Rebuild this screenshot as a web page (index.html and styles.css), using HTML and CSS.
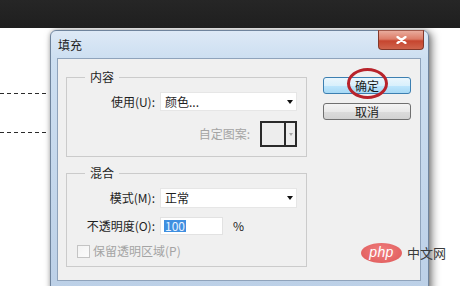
FILE: index.html
```html
<!DOCTYPE html>
<html lang="zh-CN">
<head>
<meta charset="utf-8">
<title>填充</title>
<link rel="stylesheet" href="styles.css">
</head>
<body>
<div class="topbar"></div>
<div class="stage">
  <div class="guide guide-a"></div>
  <div class="guide guide-b"></div>
  <div class="dialog">
    <div class="titlebar">
      <span class="title">填充</span>
      <div class="close">
        <svg width="11" height="8" viewBox="0 0 11 8"><path d="M1.5 1 L9.5 7 M9.5 1 L1.5 7" stroke="#fff" stroke-width="2.2" stroke-linecap="round"/></svg>
      </div>
    </div>
    <div class="client">
      <div class="groups">
        <fieldset class="group">
          <legend>内容</legend>
          <div class="rows rows-content">
            <label class="lbl">使用(U):</label>
            <div class="select sel-a"><span>颜色...</span><i class="caret"></i></div>
            <div class="pattern-row">
              <span class="disabled">自定图案:</span>
              <div class="pattern"><span class="swatch"></span><span class="parrow"><i></i></span></div>
            </div>
          </div>
        </fieldset>
        <fieldset class="group">
          <legend>混合</legend>
          <div class="rows rows-blend">
            <label class="lbl">模式(M):</label>
            <div class="select sel-b"><span>正常</span><i class="caret"></i></div>
            <label class="lbl">不透明度(O):</label>
            <div class="opacity"><div class="input"><span class="sel-text">100</span></div><span class="pct">%</span></div>
            <div class="check-row"><span class="check"></span><span class="disabled">保留透明区域(P)</span></div>
          </div>
        </fieldset>
      </div>
      <div class="buttons">
        <div class="btn btn-default">确定</div>
        <div class="btn">取消</div>
      </div>
    </div>
  </div>
  <div class="circle"></div>
  <div class="wm-logo">php</div>
  <div class="wm-text">中文网</div>
</div>
</body>
</html>
```
FILE: styles.css
```css
* { box-sizing: border-box; }
body {
  margin: 0;
  width: 460px;
  height: 286px;
  overflow: hidden;
  background: #fff;
  font: 12px/16px "Noto Sans CJK SC", "Noto Sans", sans-serif;
  color: #1e1e1e;
}
.topbar { height: 28px; background: linear-gradient(#262626, #1f1f1f); }
.stage { position: relative; height: 258px; overflow: hidden; }
.guide {
  position: absolute;
  left: 0;
  width: 48px;
  height: 1px;
  background: repeating-linear-gradient(90deg, #2b2b2b 0 4px, transparent 4px 7px);
}
.guide-a { top: 65px; }
.guide-b { top: 104px; }

.dialog {
  position: absolute;
  left: 50px;
  top: 2px;
  width: 379px;
  height: 262px;
  border: 1px solid #6f849d;
  border-radius: 6px 6px 0 0;
  background: linear-gradient(180deg, #dde9f6 0, #cddff1 27px, #bcd0e7 100%);
  padding: 0 7px 10px 6px;
  display: flex;
  flex-direction: column;
  box-shadow: 3px 2px 8px rgba(0,0,0,.5), 0 0 4px rgba(0,0,0,.2);
}
.titlebar {
  height: 27px;
  display: flex;
  justify-content: space-between;
  align-items: flex-start;
  flex: none;
}
.title { line-height: 27px; padding-left: 1px; color: #1a1a1a; }
.close {
  width: 46px;
  height: 20px;
  margin-top: -1px;
  margin-right: -3px;
  border: 1px solid #83382a;
  border-top-color: #a0594b;
  border-radius: 0 0 4px 4px;
  background: linear-gradient(180deg, #e9ab9c 0, #dc7c68 45%, #c6452f 55%, #cf644c 100%);
  display: flex;
  align-items: center;
  justify-content: center;
}
.client {
  flex: 1;
  border: 1px solid #8fa3bb;
  background: #f0f0f0;
  display: flex;
  padding: 10px 0 0 8px;
}
.groups { width: 241px; display: flex; flex-direction: column; gap: 8px; }
.group {
  margin: 0;
  padding: 0 0 9px;
  border: 1px solid #cbcbcb;
  min-width: 0;
}
.group:last-child { padding-bottom: 6px; }
.group legend { margin-left: 18px; padding: 0 5px; line-height: 16px; }
.rows {
  display: grid;
  grid-template-columns: 88px 137px;
  column-gap: 5px;
  padding-top: 7px;
}
.rows-content { grid-template-rows: 19px 26px; row-gap: 10px; }
.rows-blend { grid-template-rows: 20px 18px 16px; row-gap: 9px; }
.rows-blend .check-row { margin-top: -2px; }
.lbl { text-align: right; align-self: center; }
.select {
  background: #fff;
  border: 1px solid #e6e6e6;
  display: flex;
  align-items: center;
  justify-content: space-between;
  padding: 0 3px 0 4px;
}
.caret {
  width: 0;
  height: 0;
  border-left: 3.5px solid transparent;
  border-right: 3.5px solid transparent;
  border-top: 4px solid #111;
}
.pattern-row {
  grid-column: 1 / -1;
  display: flex;
  justify-content: flex-end;
  align-items: center;
  gap: 10px;
}
.disabled { color: #a4a4a4; }
.pattern {
  width: 37px;
  height: 26px;
  border: 2px solid #2a2a2a;
  display: flex;
  background: #ededed;
}
.swatch { width: 24px; border-right: 2px solid #2a2a2a; }
.parrow { flex: 1; display: flex; align-items: center; justify-content: center; }
.parrow i {
  width: 0; height: 0;
  border-left: 2px solid transparent;
  border-right: 2px solid transparent;
  border-top: 3px solid #a8a8a8;
}
.opacity { display: flex; align-items: center; gap: 10px; }
.input {
  width: 63px;
  height: 18px;
  background: #fff;
  border: 1px solid #e2e2e2;
  display: flex;
  align-items: center;
  padding-left: 3px;
}
.sel-text { background: #3f8fe0; color: #e8f2ff; line-height: 12px; padding: 0 1px; }
.pct { color: #222; }
.check-row {
  grid-column: 1 / -1;
  display: flex;
  align-items: center;
  gap: 3px;
  padding-left: 10px;
}
.check {
  width: 13px;
  height: 13px;
  border: 1px solid #c4c4c4;
  background: linear-gradient(135deg, #f3f3f3, #fbfbfb);
}
.buttons {
  display: flex;
  flex-direction: column;
  gap: 9px;
  margin-left: 16px;
  padding-top: 8px;
}
.btn {
  width: 88px;
  height: 17px;
  border: 1px solid #707070;
  border-radius: 3px;
  background: linear-gradient(180deg, #f4f4f4 0, #e9e9e9 50%, #dcdcdc 51%, #d2d2d2 100%);
  text-align: center;
  line-height: 15px;
  color: #1a1a1a;
}
.btn-default {
  border-color: #3c7fb1;
  background: linear-gradient(180deg, #eaf6fd 0, #d9f0fc 50%, #bee6fd 51%, #a7d9f5 100%);
}
.circle {
  position: absolute;
  left: 347px;
  top: 40px;
  width: 41px;
  height: 31px;
  border: 3px solid #b8232b;
  border-radius: 50%;
}
.wm-logo {
  position: absolute;
  left: 361px;
  top: 215px;
  width: 41px;
  height: 20px;
  border-radius: 50%;
  background: radial-gradient(ellipse at 50% 40%, #f08080, #de5656);
  color: #fff;
  font: italic 14px/19px "Liberation Sans", sans-serif;
  text-align: center;
  letter-spacing: 0.3px;
}
.wm-text {
  position: absolute;
  left: 407px;
  top: 217px;
  font-size: 13px;
  line-height: 16px;
  color: #3a3a3a;
}
```
